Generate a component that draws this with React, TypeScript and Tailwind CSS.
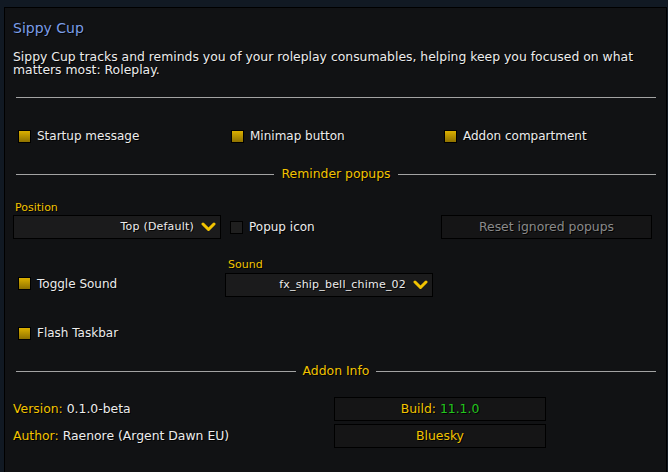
import React from "react";

const GOLD = "text-[#f2c300]";

const Check = ({ on = true }: { on?: boolean }) => (
  <span
    className={`block w-[13px] h-[13px] shrink-0 border border-black ${
      on ? "bg-gradient-to-b from-[#dcb000] to-[#8f7200]" : "bg-[#1f1f1f]"
    }`}
  />
);

const CheckItem = ({ label, on = true }: { label: string; on?: boolean }) => (
  <div className="flex items-center gap-[6px]">
    <Check on={on} />
    <span className="text-[12px] leading-[14px] text-[#ececec]">{label}</span>
  </div>
);

const Chevron = () => (
  <svg width="15" height="10" viewBox="0 0 15 10" className="shrink-0">
    <polyline points="2,2 7.5,7.5 13,2" fill="none" stroke="#f2c300" strokeWidth="3" strokeLinecap="round" strokeLinejoin="round" />
  </svg>
);

const Dropdown = ({ value }: { value: string }) => (
  <div className="flex items-center justify-end gap-[7px] w-[208px] h-[24px] pr-[4px] bg-[#1b1b1c] border border-black">
    <span className="text-[11px] tracking-[0.2px] text-[#ececec]">{value}</span>
    <Chevron />
  </div>
);

const Header = ({ title }: { title: string }) => (
  <div className="flex items-center gap-[7px] mx-[3px] h-[14px]">
    <div className="flex-1 h-px bg-[#a3a3a3]" />
    <span className={`text-[12.4px] leading-[14px] ${GOLD}`}>{title}</span>
    <div className="flex-1 h-px bg-[#a3a3a3]" />
  </div>
);

const Button = ({ children, muted }: { children: React.ReactNode; muted?: boolean }) => (
  <div
    className={`flex items-center justify-center h-[24px] bg-[#151516] border border-black text-[12.4px] ${
      muted ? "text-[#8a8a8a]" : GOLD
    }`}
  >
    {children}
  </div>
);

export default function App() {
  return (
    <div
      className="w-[668px] h-[472px] bg-[#111923] pt-[7px] pl-[4px] pr-[1px] overflow-hidden [text-shadow:1px_1px_0_rgba(0,0,0,0.9)]"
      style={{ fontFamily: '"DejaVu Sans", Verdana, sans-serif' }}
    >
      <div className="h-[470px] bg-[#111214] border border-black pt-[10px] pl-[8px] pr-[7px]">
        <div className="text-[14px] leading-[20px] text-[#7a9de8]">Sippy Cup</div>
        <p className="mt-[12px] text-[12.4px] leading-[13px] text-[#ececec]">
          Sippy Cup tracks and reminds you of your roleplay consumables, helping keep you focused on what
          matters most: Roleplay.
        </p>
        <div className="mt-[21px] mx-[3px] h-px bg-[#a3a3a3]" />

        <div className="mt-[31px] ml-[5px] grid grid-cols-[213px_213px_1fr]">
          <CheckItem label="Startup message" />
          <CheckItem label="Minimap button" />
          <CheckItem label="Addon compartment" />
        </div>

        <div className="mt-[24px]">
          <Header title="Reminder popups" />
        </div>

        <div className="mt-[20px] flex items-end">
          <div className="flex flex-col w-[217px]">
            <span className={`ml-[2px] text-[11px] leading-[13px] ${GOLD}`}>Position</span>
            <div className="mt-[1px]">
              <Dropdown value="Top (Default)" />
            </div>
          </div>
          <div className="w-[211px] h-[24px] flex items-center">
            <CheckItem label="Popup icon" on={false} />
          </div>
          <div className="w-[211px]">
            <Button muted>Reset ignored popups</Button>
          </div>
        </div>

        <div className="mt-[19px] flex items-end">
          <div className="w-[212px] h-[24px] flex items-center pl-[5px] pb-[3px]">
            <CheckItem label="Toggle Sound" />
          </div>
          <div className="flex flex-col">
            <span className={`ml-[3px] text-[11px] leading-[13px] ${GOLD}`}>Sound</span>
            <div className="mt-[2px]">
              <Dropdown value="fx_ship_bell_chime_02" />
            </div>
          </div>
        </div>

        <div className="mt-[29px] ml-[5px]">
          <CheckItem label="Flash Taskbar" />
        </div>

        <div className="mt-[24px]">
          <Header title="Addon Info" />
        </div>

        <div className="mt-[19px] flex flex-col gap-[3px]">
          <div className="flex items-center">
            <div className="w-[321px] text-[12.4px] text-[#ececec]">
              <span className={GOLD}>Version:</span> 0.1.0-beta
            </div>
            <div className="w-[212px]">
              <Button>
                Build:&nbsp;<span className="text-[#22c51e]">11.1.0</span>
              </Button>
            </div>
          </div>
          <div className="flex items-center">
            <div className="w-[321px] text-[12.4px] text-[#ececec]">
              <span className={GOLD}>Author:</span> Raenore (Argent Dawn EU)
            </div>
            <div className="w-[212px]">
              <Button>Bluesky</Button>
            </div>
          </div>
        </div>
      </div>
    </div>
  );
}
